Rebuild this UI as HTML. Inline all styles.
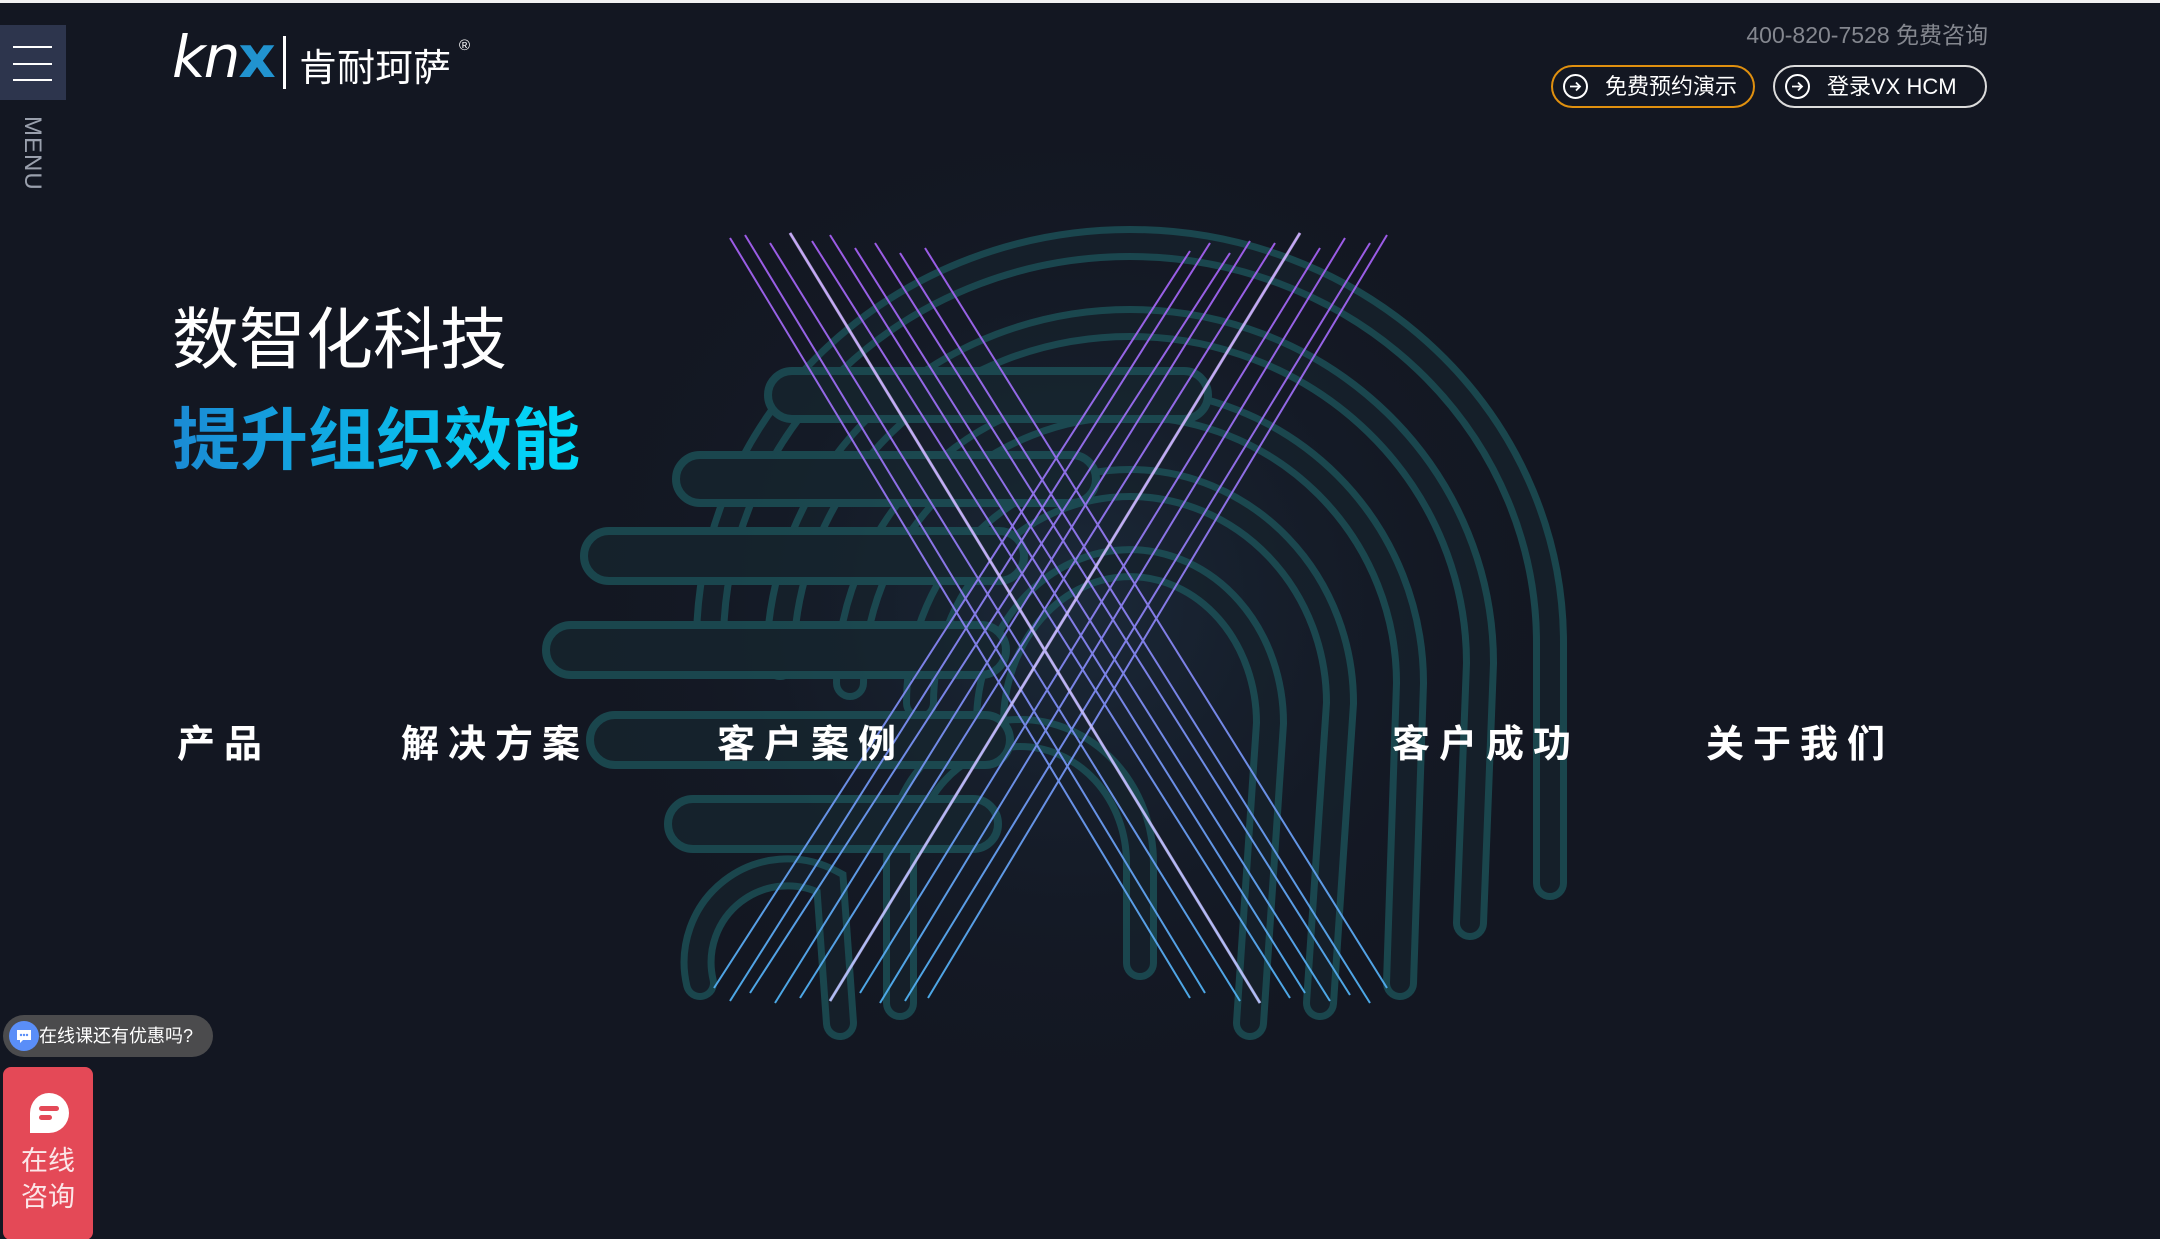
<!DOCTYPE html>
<html><head><meta charset="utf-8">
<style>
*{margin:0;padding:0;box-sizing:border-box}
html,body{width:2160px;height:1239px;overflow:hidden;background:#131722;font-family:"Liberation Sans","Noto Sans CJK SC",sans-serif;color:#fff}
body{position:relative;border-top:3px solid #f2f2f2}
.abs{position:absolute}
#art{position:absolute;left:0;top:0}
.menu{left:0;top:22px;width:66px;height:75px;background:#2d354d}
.menu i{position:absolute;left:13px;width:39px;height:2px;background:#fff}
.mtxt{left:18px;top:113px;font-size:24px;color:#9aa0ad;writing-mode:vertical-rl;letter-spacing:1px}
.knx{left:172px;top:20px;font-size:58px;font-style:italic;font-family:"DejaVu Sans","Liberation Sans",sans-serif;font-weight:400;letter-spacing:-2px}
.knx b{color:#2193cf;font-style:normal;font-weight:700}
.div{left:283px;top:33px;width:3px;height:53px;background:#fff}
.cn{left:299px;top:34px;font-size:38px;letter-spacing:0}
.reg{left:459px;top:34px;font-size:15px}
.phone{right:172px;top:13px;font-size:23px;color:#84878f}
.btn{top:62px;height:43px;border-radius:22px;border:2px solid #fff;font-size:22px;line-height:39px}
.btn .c{position:absolute;left:10px;top:7px;width:25px;height:25px;border:2px solid #fff;border-radius:50%}
.b1{left:1551px;width:204px;border-color:#e0900f;padding-left:52px}
.b2{left:1773px;width:214px;border-color:#dcdcdc;padding-left:52px}
.h1{left:172px;top:283px;font-size:67px;font-weight:400;letter-spacing:0}
.h2{left:172px;top:382px;font-size:68px;font-weight:700;background:linear-gradient(90deg,#1b8ad4,#00dcfb);-webkit-background-clip:text;background-clip:text;color:transparent}
.nav{top:710px;font-size:38px;font-weight:700;letter-spacing:9px}
.bub{left:3px;top:1012px;width:210px;height:42px;border-radius:21px;background:#4b4b4d;font-size:18px;line-height:42px;padding-left:36px}
.bub .ic{position:absolute;left:6px;top:6px;width:30px;height:30px;border-radius:50%;background:#5a8ef8}
.red{left:3px;top:1064px;width:90px;height:173px;background:#e44957;border-radius:8px;text-align:center;font-size:27px;line-height:36px;color:#fbe6e8;padding-top:76px}
</style></head><body>
<svg id="art" width="2160" height="1239" viewBox="0 0 2160 1239">
<defs>
<linearGradient id="lg" x1="0" y1="230" x2="0" y2="1000" gradientUnits="userSpaceOnUse">
<stop offset="0" stop-color="#a45ef0"/><stop offset="0.45" stop-color="#8f7cf0"/><stop offset="1" stop-color="#4fb0f0"/></linearGradient>
<radialGradient id="gl" cx="1070" cy="600" r="520" gradientUnits="userSpaceOnUse"><stop offset="0" stop-color="#1b2a3a"/><stop offset="1" stop-color="#131722" stop-opacity="0"/></radialGradient>
</defs>
<rect x="500" y="150" width="1200" height="950" fill="url(#gl)"/>
<g fill="none" stroke-linecap="round" opacity="0.75">
<g stroke="#1d565c" stroke-width="34">
<path d="M710 640 A420 400 0 0 1 1550 640 L1550 880"/>
<path d="M780 660 A350 340 0 0 1 1480 660 L1470 920"/>
<path d="M850 680 A280 280 0 0 1 1410 680 L1400 980"/>
<path d="M920 700 A210 220 0 0 1 1340 700 L1320 1000"/>
<path d="M990 720 A140 160 0 0 1 1270 720 L1250 1020"/>
<path d="M900 1000 L900 860 A120 130 0 0 1 1140 860 L1140 960"/>
<path d="M700 980 A90 90 0 0 1 830 880 L840 1020"/>
</g>
<g stroke="#16222c" stroke-width="20">
<path d="M710 640 A420 400 0 0 1 1550 640 L1550 880"/>
<path d="M780 660 A350 340 0 0 1 1480 660 L1470 920"/>
<path d="M850 680 A280 280 0 0 1 1410 680 L1400 980"/>
<path d="M920 700 A210 220 0 0 1 1340 700 L1320 1000"/>
<path d="M990 720 A140 160 0 0 1 1270 720 L1250 1020"/>
<path d="M900 1000 L900 860 A120 130 0 0 1 1140 860 L1140 960"/>
<path d="M700 980 A90 90 0 0 1 830 880 L840 1020"/>
</g>
<g fill="#16262f" stroke="#1d565c" stroke-width="8">
<rect x="768" y="368" width="440" height="48" rx="24"/>
<rect x="676" y="452" width="420" height="48" rx="24"/>
<rect x="584" y="528" width="440" height="50" rx="25"/>
<rect x="546" y="622" width="460" height="50" rx="25"/>
<rect x="590" y="712" width="420" height="50" rx="25"/>
<rect x="668" y="796" width="330" height="50" rx="25"/>
</g>
</g>
<g stroke="url(#lg)" stroke-width="2" opacity="0.95">
<line x1="730" y1="235" x2="1190" y2="995"/><line x1="745" y1="232" x2="1205" y2="990"/>
<line x1="770" y1="240" x2="1240" y2="998"/><line x1="790" y1="230" x2="1260" y2="1000"/>
<line x1="812" y1="238" x2="1290" y2="995"/><line x1="830" y1="232" x2="1305" y2="990"/>
<line x1="855" y1="245" x2="1330" y2="998"/><line x1="875" y1="240" x2="1350" y2="992"/>
<line x1="900" y1="250" x2="1370" y2="1000"/><line x1="925" y1="245" x2="1387" y2="985"/>
<line x1="1387" y1="232" x2="928" y2="995"/><line x1="1370" y1="240" x2="905" y2="998"/>
<line x1="1345" y1="235" x2="880" y2="1000"/><line x1="1320" y1="245" x2="860" y2="990"/>
<line x1="1300" y1="230" x2="830" y2="998"/><line x1="1275" y1="240" x2="800" y2="995"/>
<line x1="1250" y1="238" x2="775" y2="1000"/><line x1="1230" y1="250" x2="750" y2="990"/>
<line x1="1210" y1="240" x2="730" y2="998"/><line x1="1190" y1="248" x2="714" y2="985"/>
</g>
<g stroke="#d8c8ff" stroke-width="3" opacity="0.7">
<line x1="790" y1="230" x2="1260" y2="1000"/><line x1="1300" y1="230" x2="830" y2="998"/>
</g>
</svg>

<div class="abs menu"><i style="top:21px"></i><i style="top:38px"></i><i style="top:54px"></i></div>
<div class="abs mtxt">MENU</div>
<div class="abs knx">kn<b>x</b></div>
<div class="abs div"></div>
<div class="abs cn">肯耐珂萨</div>
<div class="abs reg">®</div>
<div class="abs phone">400-820-7528 免费咨询</div>
<div class="abs btn b1"><span class="c"><svg width="21" height="21" viewBox="0 0 21 21" style="position:absolute;left:0;top:0"><path d="M5 10.5H15M11 6.5L15 10.5L11 14.5" stroke="#fff" stroke-width="1.8" fill="none"/></svg></span>免费预约演示</div>
<div class="abs btn b2"><span class="c"><svg width="21" height="21" viewBox="0 0 21 21" style="position:absolute;left:0;top:0"><path d="M5 10.5H15M11 6.5L15 10.5L11 14.5" stroke="#fff" stroke-width="1.8" fill="none"/></svg></span>登录VX HCM</div>
<div class="abs h1">数智化科技</div>
<div class="abs h2">提升组织效能</div>
<div class="abs nav" style="left:177px">产品</div>
<div class="abs nav" style="left:401px">解决方案</div>
<div class="abs nav" style="left:717px">客户案例</div>
<div class="abs nav" style="left:1392px">客户成功</div>
<div class="abs nav" style="left:1706px">关于我们</div>
<div class="abs bub"><span class="ic"><svg width="30" height="30" viewBox="0 0 30 30"><path d="M8 9h14v10h-8l-3 3v-3H8z" fill="#fff"/><circle cx="12" cy="14" r="1.2" fill="#5a8ef8"/><circle cx="15" cy="14" r="1.2" fill="#5a8ef8"/><circle cx="18" cy="14" r="1.2" fill="#5a8ef8"/></svg></span>在线课还有优惠吗?</div>
<div class="abs red"><svg class="abs" style="left:24px;top:24px" width="44" height="44" viewBox="0 0 44 44"><path d="M22 2A20 20 0 1 1 22 42H3V22A19 20 0 0 1 22 2z" fill="#fff"/><rect x="12" y="15" width="20" height="5" rx="2.5" fill="#e44957"/><rect x="12" y="24" width="13" height="5" rx="2.5" fill="#e44957"/></svg>在线<br>咨询</div>
</body></html>
